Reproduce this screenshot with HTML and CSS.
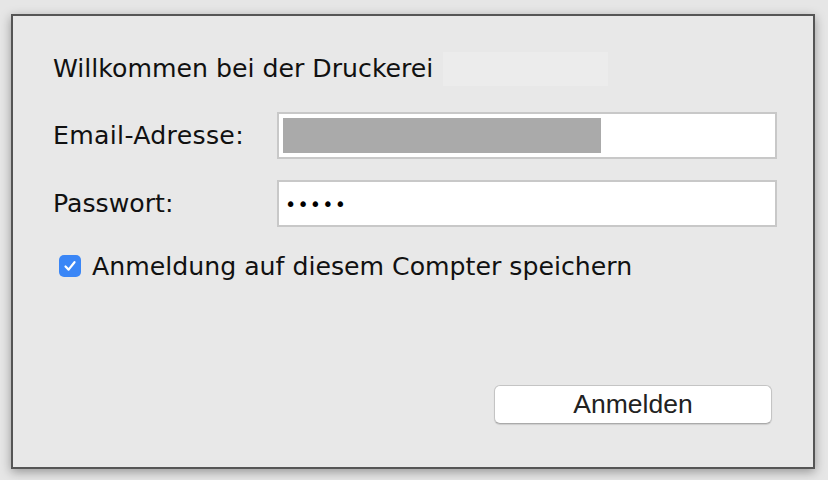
FILE: index.html
```html
<!DOCTYPE html>
<html lang="de">
<head>
<meta charset="utf-8">
<title>Anmeldung</title>
<link rel="stylesheet" href="styles.css">
</head>
<body>
<div class="window">
  <div class="title-row">
    <span class="title">Willkommen bei der Druckerei</span>
    <span class="redact-light"></span>
  </div>
  <div class="field-row email-row">
    <label class="label">Email-Adresse:</label>
    <div class="input"><span class="redact-dark"></span></div>
  </div>
  <div class="field-row pw-row">
    <label class="label">Passwort:</label>
    <div class="input"><span class="dots">•••••</span></div>
  </div>
  <div class="check-row">
    <span class="checkbox">
      <svg width="14" height="14" viewBox="0 0 14 14"><path d="M2.5 7.5 L5.6 10.6 L11.5 3.2" fill="none" stroke="#fff" stroke-width="2.2" stroke-linecap="round" stroke-linejoin="round"/></svg>
    </span>
    <span class="check-label">Anmeldung auf diesem Compter speichern</span>
  </div>
  <div class="actions">
    <button class="button">Anmelden</button>
  </div>
</div>
</body>
</html>
```
FILE: styles.css
```css
* { box-sizing: border-box; }
html, body { margin: 0; padding: 0; }
body {
  width: 828px;
  height: 480px;
  background: #e6e6e6;
  font-family: "DejaVu Sans", sans-serif;
  color: #111;
  overflow: hidden;
  padding: 14px 13px 0 11px;
}
.window {
  width: 804px;
  height: 455px;
  border: 2px solid #555;
  background: #e8e8e8;
  box-shadow: 0 3px 10px rgba(0,0,0,0.35);
  padding: 36px 36px 43px 40px;
  display: flex;
  flex-direction: column;
}
.title-row {
  display: flex;
  align-items: center;
  height: 34px;
  gap: 10px;
}
.title { font-size: 25.2px; line-height: 34px; }
.redact-light {
  width: 165px;
  height: 34px;
  background: #ececec;
}
.field-row {
  display: flex;
  align-items: center;
  height: 47px;
}
.email-row { margin-top: 26px; }
.pw-row { margin-top: 21px; }
.label {
  flex: 0 0 224px;
  font-size: 25.2px;
}
.email-row .label { letter-spacing: 0.3px; }
.input {
  flex: 0 0 500px;
  height: 47px;
  background: #fff;
  border: 2px solid #c8c8c8;
  padding: 4px;
  display: flex;
  align-items: center;
}
.redact-dark {
  width: 318px;
  height: 35px;
  background: #aaaaaa;
}
.dots {
  font-size: 19px;
  letter-spacing: 1.2px;
  padding-left: 2px;
  color: #000;
}
.check-row {
  display: flex;
  align-items: center;
  height: 26px;
  margin-top: 26px;
  padding-left: 6px;
  gap: 11px;
}
.checkbox {
  flex: 0 0 22px;
  height: 22px;
  border-radius: 5px;
  background: #3a86f6;
  display: flex;
  align-items: center;
  justify-content: center;
}
.check-label { font-size: 25.2px; }
.actions {
  margin-top: auto;
  display: flex;
  justify-content: flex-end;
  padding-right: 5px;
}
.button {
  width: 278px;
  height: 39px;
  background: #fff;
  border: 1px solid #c4c4c4;
  border-bottom-color: #aaa;
  border-radius: 6px;
  box-shadow: 0 1px 1px rgba(0,0,0,0.12);
  font-family: "Liberation Sans", Arial, sans-serif;
  font-size: 26.5px;
  color: #222;
  padding: 0;
}
```
